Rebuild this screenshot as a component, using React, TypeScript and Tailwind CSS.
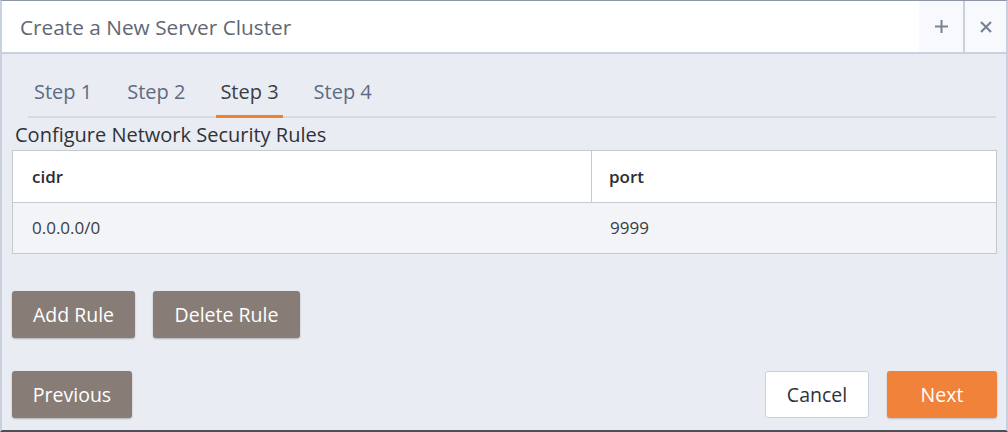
export default function App() {
  const tabs = ['Step 1', 'Step 2', 'Step 3', 'Step 4']
  return (
    <div
      className="w-[1008px] h-[432px] bg-[#e9ecf2] border-t border-t-[#8f96a3] border-b-2 border-b-[#4a4f58] border-x-2 border-x-[#c9d1de] flex flex-col text-[#3a3f47]"
      style={{ fontFamily: '"Open Sans", "Noto Sans", sans-serif' }}
    >
      <div className="h-[53px] bg-white border-b-2 border-[#c9d1de] flex items-stretch shrink-0">
        <div className="flex-1 flex items-center pl-[18px] pt-[3px] text-[20.8px] text-[#5f6775]">
          Create a New Server Cluster
        </div>
        <button className="w-[46px] bg-[#f7f9fc] flex items-center justify-center text-[#7a8394] border-r-2 border-[#c9d1de]">
          <svg width="15" height="15" viewBox="0 0 15 15">
            <path d="M7.5 1v13M1 7.5h13" stroke="currentColor" strokeWidth="2" />
          </svg>
        </button>
        <button className="w-[41px] bg-[#f7f9fc] flex items-center justify-center text-[#7a8394]">
          <svg width="14" height="14" viewBox="0 0 14 14">
            <path d="M2 2l10 10M12 2L2 12" stroke="currentColor" strokeWidth="2.2" />
          </svg>
        </button>
      </div>

      <div className="flex-1 flex flex-col px-[10px]">
        <div className="ml-[16px] mt-[12px] flex gap-[27px] border-b-2 border-[#d5dae2] h-[52px] pl-[2px]">
          {tabs.map((t, i) => (
            <div
              key={t}
              className={
                'px-[4px] flex items-center text-[20px] border-b-[3px] -mb-[2px] pt-[3px] ' +
                (i === 2 ? 'border-[#f0822e] text-[#3a3d42]' : 'border-transparent text-[#5d6b84]')
              }
            >
              {t}
            </div>
          ))}
        </div>

        <div className="ml-[3px] mt-[4px] text-[20px] leading-[26px] text-[#2f3237]">
          Configure Network Security Rules
        </div>

        <div className="border border-[#c5c9d0] w-[985px] mt-[2px]">
          <div className="flex h-[52px] bg-white border-b border-[#c5c9d0] text-[17px] font-semibold text-[#2b2e33]">
            <div className="w-[579px] border-r border-[#c5c9d0] flex items-center pl-[19px]">cidr</div>
            <div className="flex-1 flex items-center pl-[17px]">port</div>
          </div>
          <div className="flex h-[50px] bg-[#f3f4f8] text-[17px] text-[#3a3d42]">
            <div className="w-[579px] flex items-center pl-[19px]">0.0.0.0/0</div>
            <div className="flex-1 flex items-center pl-[18px]">9999</div>
          </div>
        </div>

        <div className="flex gap-[18px] mt-[37px]">
          <button className="w-[123px] h-[47px] rounded-[3px] bg-[#877d76] text-white text-[19.5px] shadow-[0_1px_2px_rgba(0,0,0,0.25)]">
            Add Rule
          </button>
          <button className="w-[147px] h-[47px] rounded-[3px] bg-[#877d76] text-white text-[19.5px] shadow-[0_1px_2px_rgba(0,0,0,0.25)]">
            Delete Rule
          </button>
        </div>

        <div className="flex items-center mt-[33px] w-[985px]">
          <button className="w-[120px] h-[47px] rounded-[3px] bg-[#877d76] text-white text-[19.5px] shadow-[0_1px_2px_rgba(0,0,0,0.25)]">
            Previous
          </button>
          <div className="flex-1" />
          <button className="w-[104px] h-[47px] rounded-[3px] bg-white border border-[#c9d1de] text-[#2f3237] text-[19.5px] mr-[18px]">
            Cancel
          </button>
          <button className="w-[110px] h-[47px] rounded-[3px] bg-[#f0823a] text-white text-[19.5px] shadow-[0_1px_2px_rgba(0,0,0,0.2)]">
            Next
          </button>
        </div>
      </div>
    </div>
  )
}
